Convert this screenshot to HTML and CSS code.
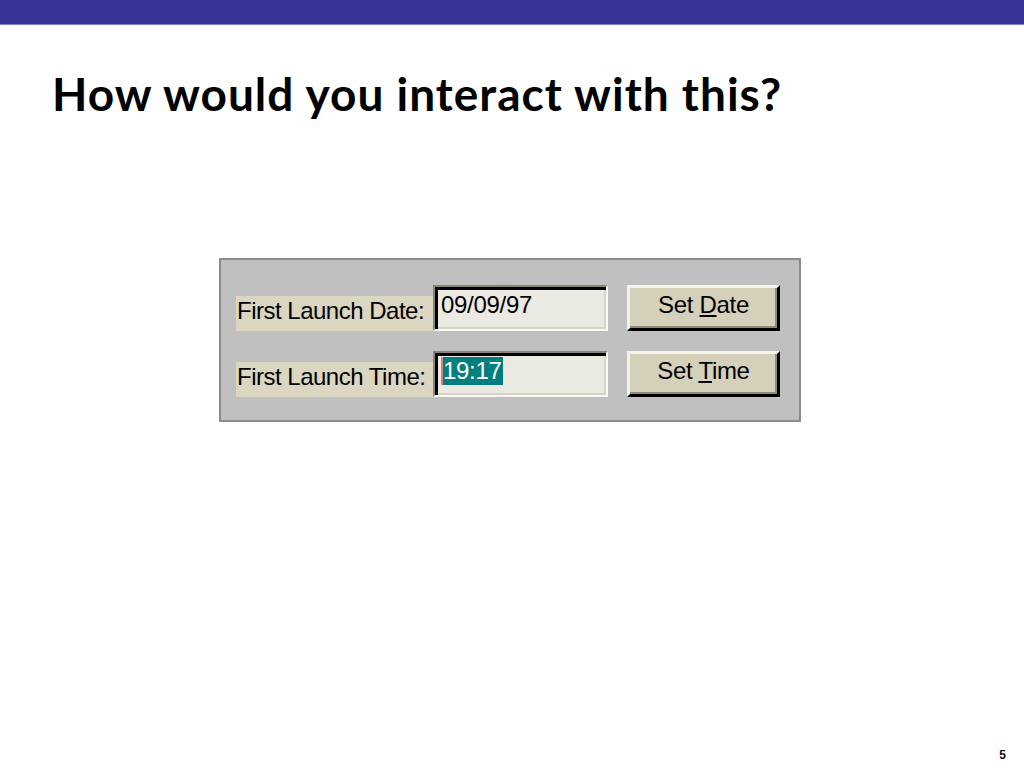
FILE: index.html
```html
<!DOCTYPE html>
<html lang="en">
<head>
    <meta charset="UTF-8">
    <meta name="viewport" content="width=device-width, initial-scale=1.0">
    <title>How would you interact with this?</title>
    <link rel="stylesheet" href="styles.css">
</head>
<body>
    <div class="top-bar"></div>

    <h1 class="slide-title">How would you interact with this?</h1>

    <!-- old-style launch settings dialog -->
    <div class="launch-panel">
        <div class="launch-row">
            <span class="launch-label">First Launch Date:</span>
            <div class="launch-field">09/09/97</div>
            <button class="launch-btn">Set <u>D</u>ate</button>
        </div>
        <div class="launch-row">
            <span class="launch-label">First Launch Time:</span>
            <div class="launch-field"><span class="selected">19:17</span></div>
            <button class="launch-btn">Set <u>T</u>ime</button>
        </div>
    </div>

    <div class="page-num">5</div>
</body>
</html>
```

FILE: styles.css
```css
body {
    margin: 0;
    background: #ffffff;
    font-family: 'Liberation Sans', Arial, sans-serif;
    height: 768px;
    position: relative;
    overflow: hidden;
}

.top-bar {
    height: 24px;
    background-color: #363597;
    border-bottom: 1px solid #8482d6;
}

.slide-title {
    margin: 0;
    padding: 39px 0 0 52px;
    font-family: 'Lato', 'Open Sans', sans-serif;
    font-weight: 700;
    font-size: 46px;
    letter-spacing: 1px;
    line-height: 60px;
    color: #000;
}

.launch-panel {
    margin: 134px 0 0 219px;
    padding: 25px 18px 23px 15px;
    box-sizing: border-box;
    width: 582px;
    background-color: #c0c0c0;
    border: 2px solid #8c8c8c;
    display: flex;
    flex-direction: column;
    gap: 20px;
}

.launch-row {
    display: flex;
    align-items: flex-end;
    height: 46px;
}

.launch-label {
    width: 197px;
    height: 35px;
    line-height: 30px;
    background-color: #dad6c2;
    font-size: 24px;
    letter-spacing: -0.5px;
    padding-left: 1px;
    box-sizing: border-box;
    white-space: nowrap;
}

.launch-field {
    width: 175px;
    height: 46px;
    box-sizing: border-box;
    background-color: #ebeae2;
    border: 2px solid;
    border-color: #8a8676 #fbfaf5 #fbfaf5 #8a8676;
    box-shadow: inset 3px 3px 0 #000, inset -2px -2px 0 #d6d3c4;
    padding: 4px 0 0 6px;
    font-size: 24px;
    letter-spacing: -0.3px;
    line-height: 28px;
    align-self: stretch;
}

.selected {
    display: inline-block;
    background-color: #007f7f;
    color: #ffffff;
    border-left: 2px solid #e57a7a;
    padding-right: 1px;
    line-height: 28px;
}

.launch-btn {
    margin-left: 19px;
    width: 153px;
    height: 46px;
    align-self: stretch;
    background-color: #d5d0b9;
    border: 3px solid;
    border-color: #f4f2ea #000 #000 #f4f2ea;
    box-shadow: inset -2px -2px 0 #8e8a76;
    font-family: 'Liberation Sans', Arial, sans-serif;
    font-size: 24px;
    letter-spacing: -0.3px;
    color: #000;
    padding: 0 0 6px 0;
}

.page-num {
    position: absolute;
    right: 18px;
    bottom: 6px;
    font-family: 'Liberation Sans', Arial, sans-serif;
    font-weight: 700;
    font-size: 12px;
    color: #111;
}
```
